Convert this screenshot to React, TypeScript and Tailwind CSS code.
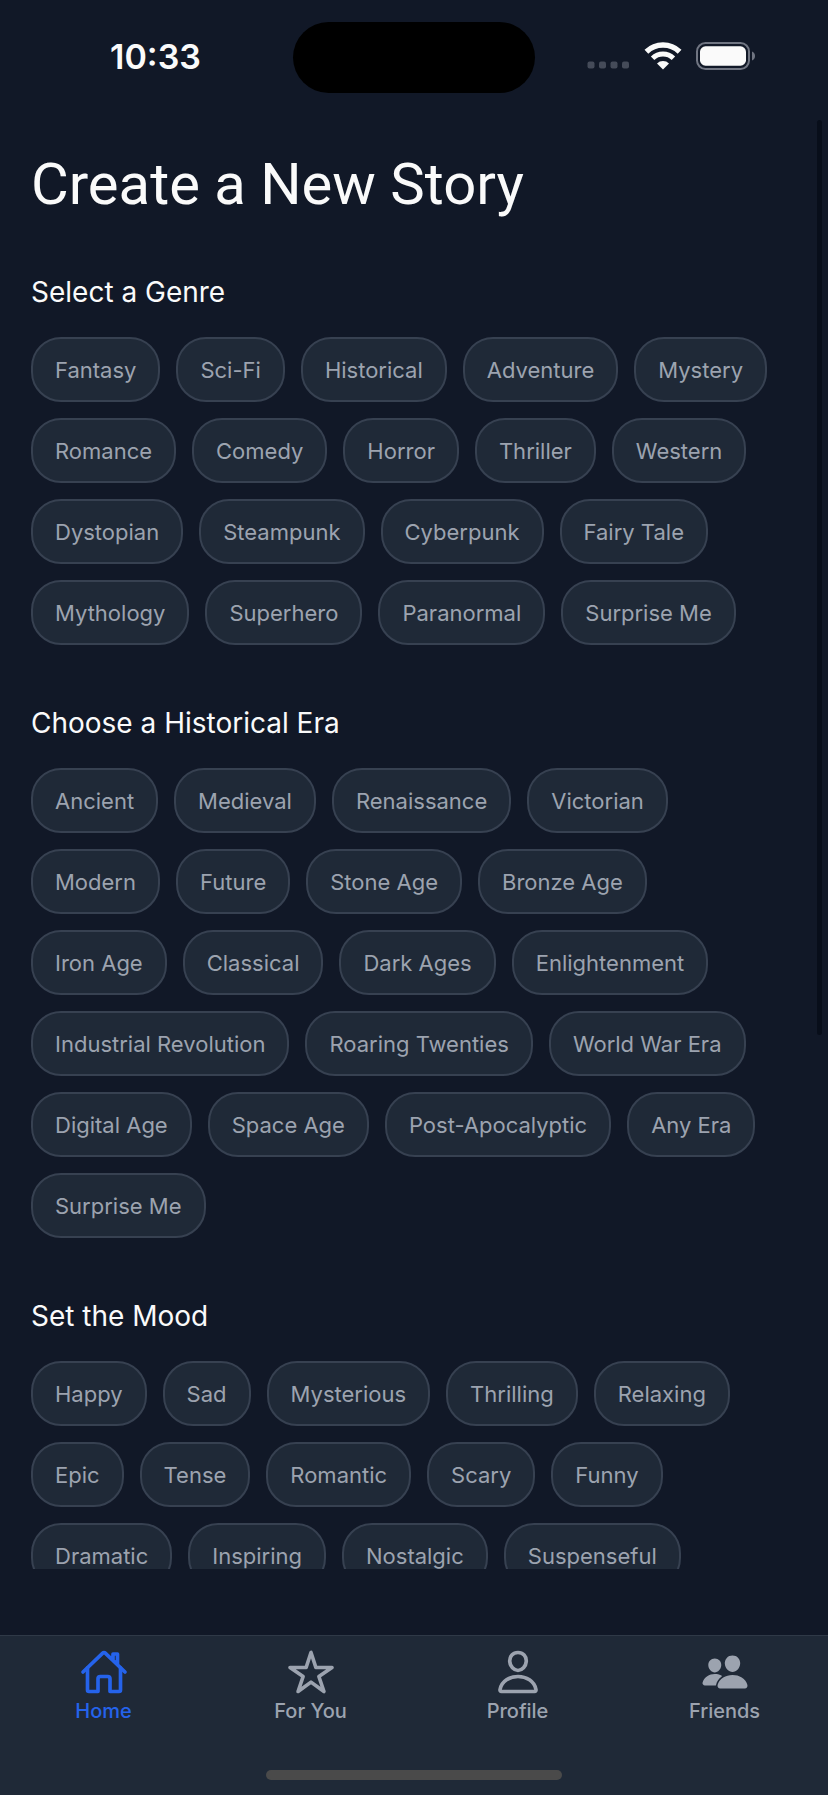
import { useState } from "react";
import type { IconType } from "react-icons";
import { IoHomeOutline, IoPeople, IoPersonOutline, IoStarOutline } from "react-icons/io5";

const groups = [
  {
    id: "genre",
    title: "Select a Genre",
    options: [
      "Fantasy", "Sci-Fi", "Historical", "Adventure", "Mystery", "Romance",
      "Comedy", "Horror", "Thriller", "Western", "Dystopian", "Steampunk",
      "Cyberpunk", "Fairy Tale", "Mythology", "Superhero", "Paranormal", "Surprise Me",
    ],
  },
  {
    id: "era",
    title: "Choose a Historical Era",
    options: [
      "Ancient", "Medieval", "Renaissance", "Victorian", "Modern", "Future",
      "Stone Age", "Bronze Age", "Iron Age", "Classical", "Dark Ages", "Enlightenment",
      "Industrial Revolution", "Roaring Twenties", "World War Era", "Digital Age",
      "Space Age", "Post-Apocalyptic", "Any Era", "Surprise Me",
    ],
  },
  {
    id: "mood",
    title: "Set the Mood",
    options: [
      "Happy", "Sad", "Mysterious", "Thrilling", "Relaxing", "Epic", "Tense",
      "Romantic", "Scary", "Funny", "Dramatic", "Inspiring", "Nostalgic", "Suspenseful",
    ],
  },
];

const outline = "size-12 [&_path]:stroke-[39px] [&_circle]:stroke-[39px]";

const tabs: { label: string; icon: IconType; iconClass: string }[] = [
  { label: "Home", icon: IoHomeOutline, iconClass: outline },
  { label: "For You", icon: IoStarOutline, iconClass: outline },
  { label: "Profile", icon: IoPersonOutline, iconClass: outline },
  { label: "Friends", icon: IoPeople, iconClass: "size-12" },
];

const StatusBar = () => (
  <header className="grid shrink-0 grid-cols-[1fr_242px_1fr] items-center px-[18px] pt-[22px] pb-[27px]">
    <span className="pb-[2px] text-center text-[34px] leading-10 font-semibold">10:33</span>
    <div className="h-[71px] rounded-full bg-black" />
    <div className="flex items-center justify-center gap-[14px] pr-[2px] pb-1">
      <svg width="43" height="28" viewBox="0 0 43 28" fill="#454b59" aria-hidden="true">
        <rect x="0.5" y="19.5" width="7" height="7" rx="2" />
        <rect x="12" y="19.5" width="7" height="7" rx="2" />
        <rect x="23.5" y="19.5" width="7" height="7" rx="2" />
        <rect x="35" y="19.5" width="7" height="7" rx="2" />
      </svg>
      <svg width="38" height="28" viewBox="0 0 38 28" fill="none" stroke="#fafafa" aria-hidden="true">
        <path d="M2.4 9.8a23.8 23.8 0 0 1 33.2 0" strokeWidth="5.4" />
        <path d="M8.6 16.2a15 15 0 0 1 20.8 0" strokeWidth="5" />
        <path d="M19 27.4l-6-6a8.6 8.6 0 0 1 12 0z" fill="#fafafa" stroke="none" />
      </svg>
      <svg width="60" height="28" viewBox="0 0 60 28" fill="none" aria-hidden="true">
        <rect x="1" y="1" width="52" height="26" rx="8.5" stroke="#707582" strokeWidth="2" />
        <rect x="4" y="4.3" width="46" height="19.4" rx="5.5" fill="#fafafa" />
        <path d="M56 9.5c4 1.4 4 7.6 0 9z" fill="#707582" />
      </svg>
    </div>
  </header>
);

const App = () => {
  const [activeTab, setActiveTab] = useState("Home");
  const [selected, setSelected] = useState<Record<string, string>>({});

  return (
    <div className="relative flex h-screen flex-col bg-[#111827] font-['Inter','Liberation_Sans',sans-serif] text-[#fafafa]">
      <StatusBar />

      <main className="mb-[66px] min-h-0 flex-1 overflow-hidden px-[31px] pt-7">
        <h1 className="font-[Roboto,sans-serif] text-[58px] leading-[72px]">Create a New Story</h1>

        {groups.map((group) => (
          <section key={group.id} aria-labelledby={group.id} className="mb-[60px] first-of-type:mt-[54px]">
            <h2 id={group.id} className="mb-[27px] text-[28px] leading-9">
              {group.title}
            </h2>
            <div className="flex flex-wrap gap-4">
              {group.options.map((option) => (
                <button
                  key={option}
                  type="button"
                  aria-pressed={selected[group.id] === option}
                  onClick={() => setSelected({ ...selected, [group.id]: option })}
                  className="h-[65px] rounded-[30px] border-2 border-[#374151] bg-[#1f2937] px-[22px] pt-[2px] text-[22px] text-[#9ca3af] aria-pressed:border-[#2563eb] aria-pressed:text-[#fafafa]"
                >
                  {option}
                </button>
              ))}
            </div>
          </section>
        ))}
      </main>

      {/* Scroll indicator */}
      <div className="absolute top-[120px] right-[6px] h-[51%] w-[5px] rounded-full bg-[#080e1a]" />

      {/* Tab bar */}
      <div className="shrink-0 border-t border-[#2f3947] bg-[#1f2937] pt-3 pb-[15px]">
        <nav className="grid grid-cols-4">
          {tabs.map(({ label, icon: Icon, iconClass }) => (
            <button
              key={label}
              type="button"
              aria-current={activeTab === label ? "page" : undefined}
              onClick={() => setActiveTab(label)}
              className="flex flex-col items-center gap-[3px] text-[20px] leading-6 font-medium text-[#9ca3af] aria-[current=page]:text-[#2563eb]"
            >
              <Icon className={iconClass} aria-hidden="true" />
              {label}
            </button>
          ))}
        </nav>
        <div className="mx-auto mt-[47px] h-[10px] w-[296px] rounded-full bg-[#4a4a4a]" />
      </div>
    </div>
  );
};

export default App;
